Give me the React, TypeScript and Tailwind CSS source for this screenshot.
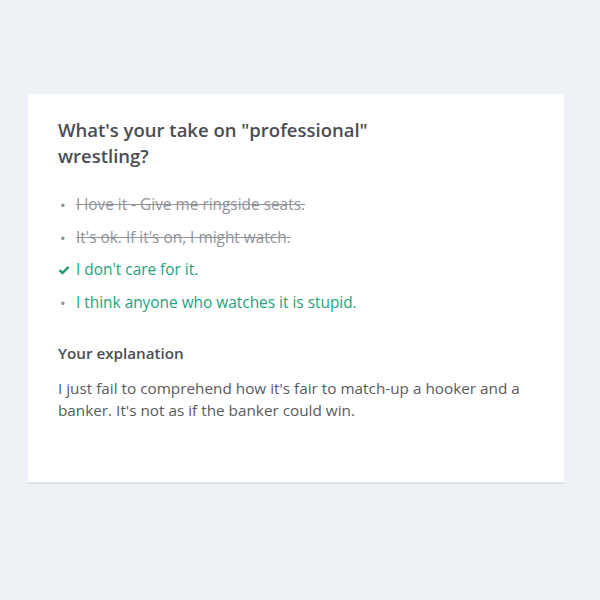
import React from "react";

export default function App() {
  const font = { fontFamily: '"Open Sans", "Noto Sans", sans-serif' };
  return (
    <div className="w-[600px] h-[600px] bg-[#eef2f6] pt-[94px] pl-[28px]" style={font}>
      <div className="w-[536px] h-[390px] bg-white border-b-2 border-[#dfe3e8] pt-[23px] px-[30px]">
        <h1 className="text-[18.5px] leading-[26px] font-semibold text-[#4a4d52] max-w-[340px]">
          What's your take on "professional" wrestling?
        </h1>
        <ul className="mt-[26px] flex flex-col gap-[12.5px] text-[15.4px] leading-[20px]">
          <li className="flex items-center">
            <span className="w-[18px] text-[#8a8e93] text-[15px] pl-[2px]">•</span>
            <span className="line-through text-[#909398]">I love it - Give me ringside seats.</span>
          </li>
          <li className="flex items-center">
            <span className="w-[18px] text-[#8a8e93] text-[15px] pl-[2px]">•</span>
            <span className="line-through text-[#909398]">It's ok. If it's on, I might watch.</span>
          </li>
          <li className="flex items-center">
            <span className="w-[18px] flex items-center">
              <svg width="12" height="10" viewBox="0 0 12 10">
                <path d="M1.5 5.2 L4.5 8 L10.5 1.8" fill="none" stroke="#1f9e78" strokeWidth="2.4" />
              </svg>
            </span>
            <span className="text-[#22a37d]">I don't care for it.</span>
          </li>
          <li className="flex items-center">
            <span className="w-[18px] text-[#8a8e93] text-[15px] pl-[2px]">•</span>
            <span className="text-[#22a37d]">I think anyone who watches it is stupid.</span>
          </li>
        </ul>
        <h2 className="mt-[30px] text-[15.2px] leading-[20px] font-semibold text-[#4a4d52]">Your explanation</h2>
        <p className="mt-[14px] text-[15.3px] leading-[22px] text-[#585b60]">
          I just fail to comprehend how it's fair to match-up a hooker and a banker. It's not as if the banker could win.
        </p>
      </div>
    </div>
  );
}
